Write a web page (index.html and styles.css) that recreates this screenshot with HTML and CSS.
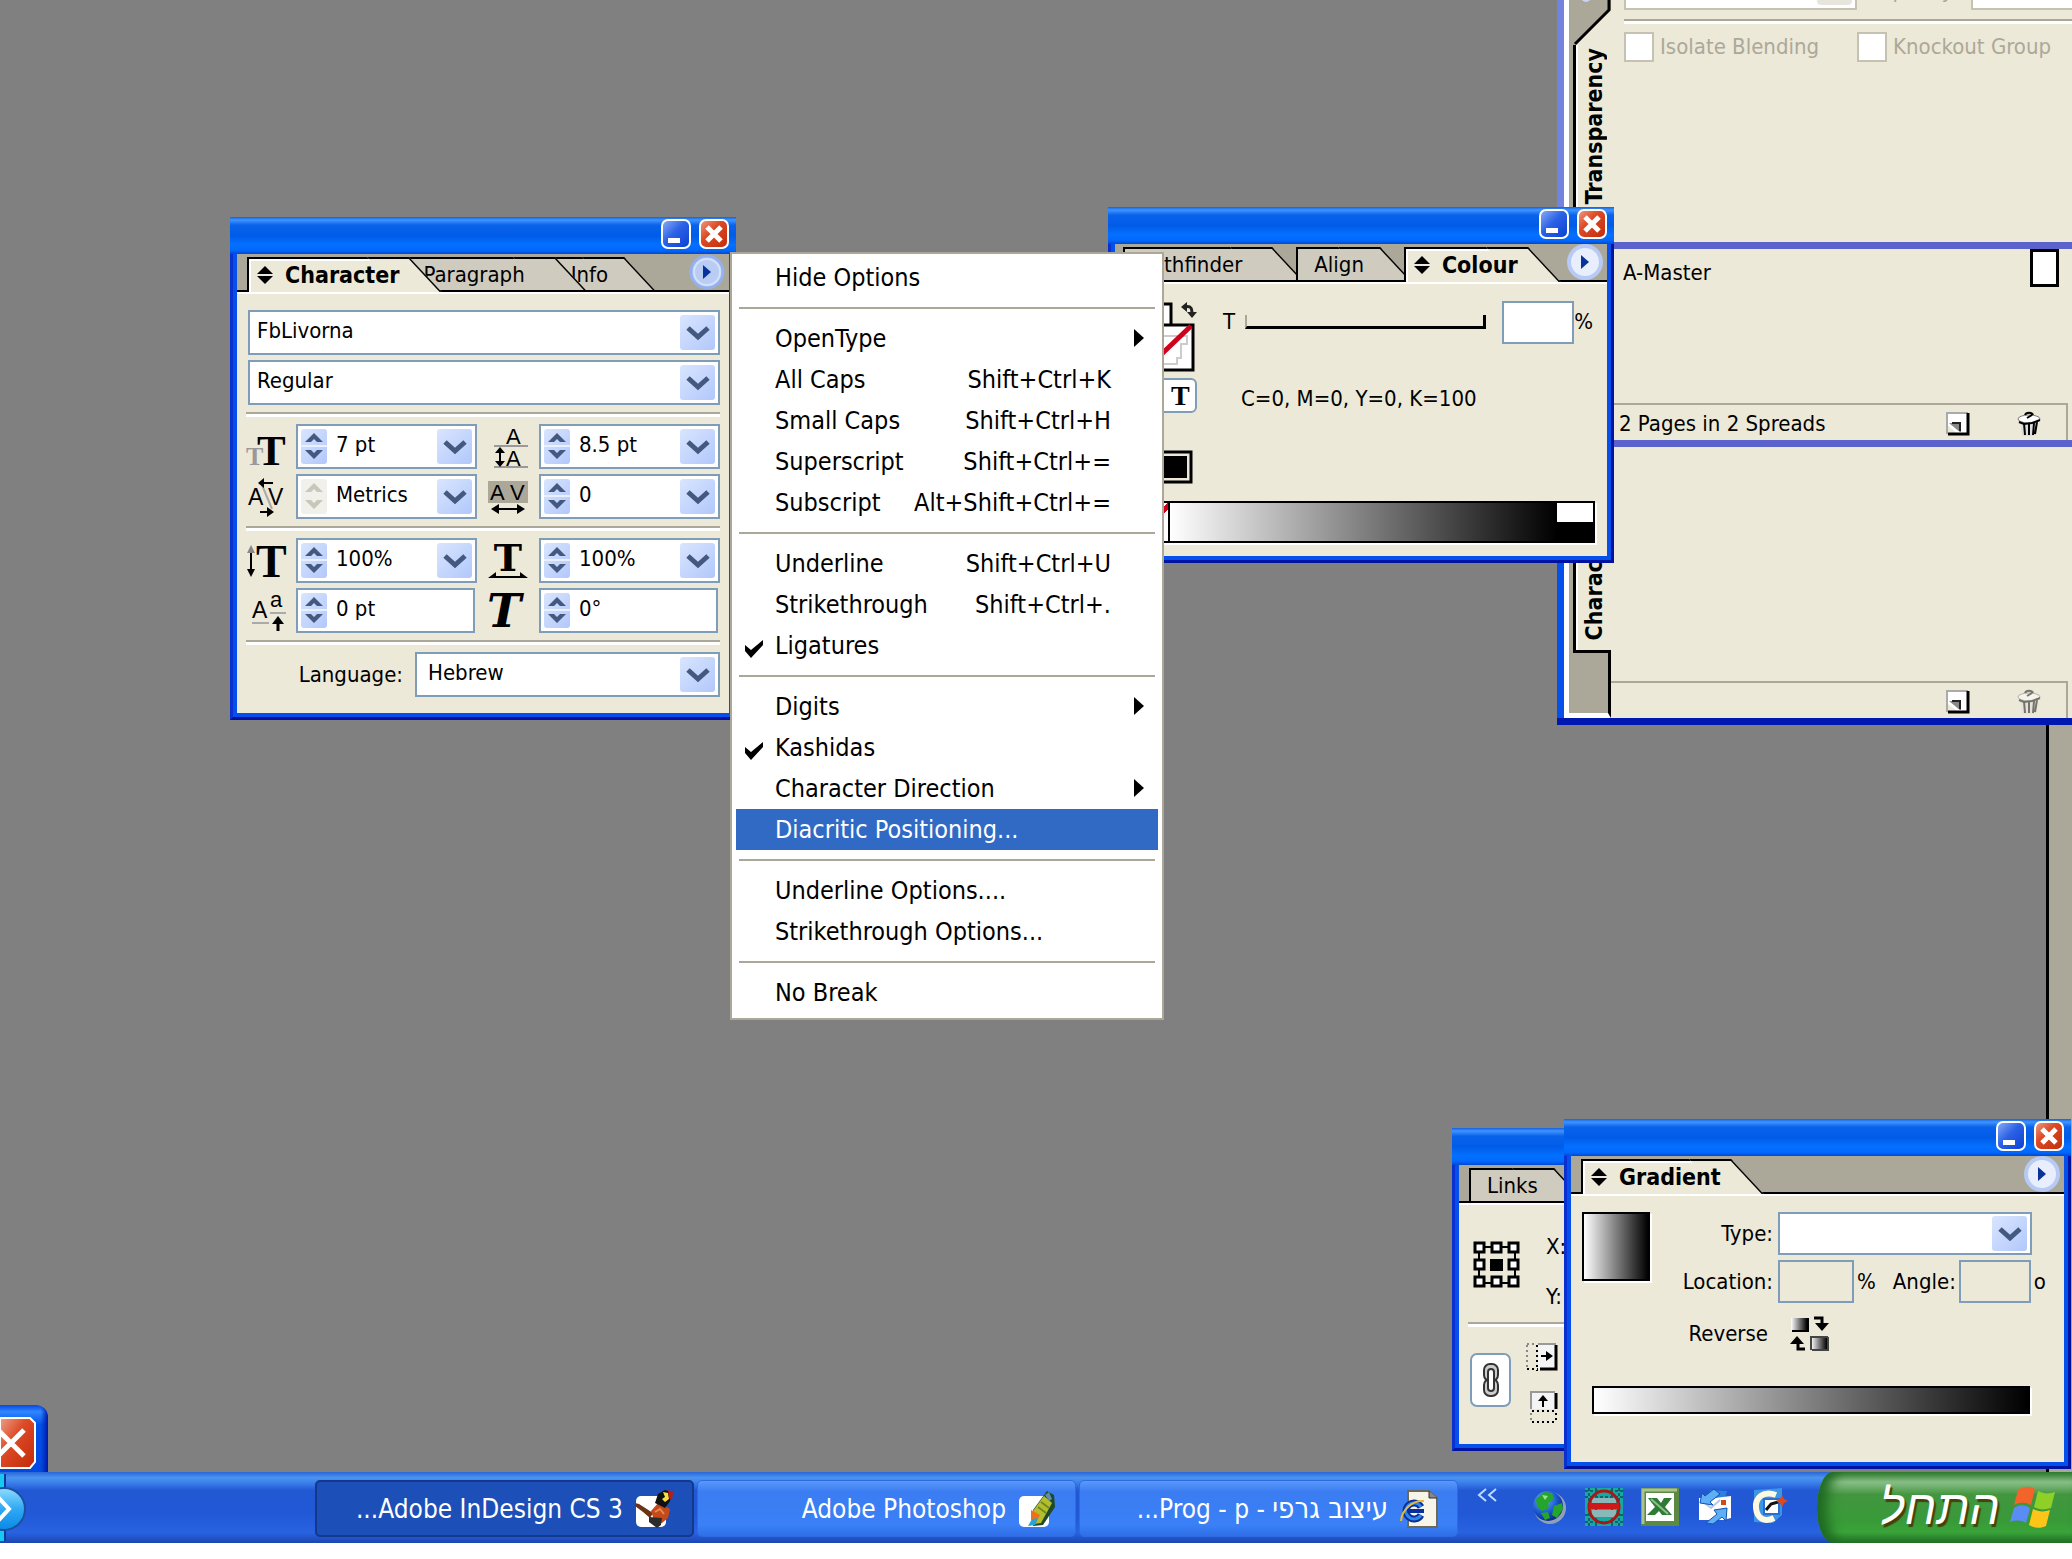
FILE: index.html
```html
<!DOCTYPE html>
<html lang="en">
<head>
  <meta charset="UTF-8">
  <title>Adobe InDesign CS 3</title>
  <link rel="stylesheet" href="styles.css">
</head>
<body>
  <!-- Shared icons -->
  <svg class="defs" width="0" height="0" aria-hidden="true">
    <defs>
      <linearGradient id="blueBtn" x1="0" y1="0" x2="1" y2="1">
        <stop offset="0" stop-color="#8fb0f8"/><stop offset=".45" stop-color="#2b62e6"/><stop offset="1" stop-color="#0a3fd0"/>
      </linearGradient>
      <linearGradient id="redBtn" x1="0" y1="0" x2="1" y2="1">
        <stop offset="0" stop-color="#eda08a"/><stop offset=".4" stop-color="#dd4a26"/><stop offset="1" stop-color="#c02a08"/>
      </linearGradient>
      <linearGradient id="drop" x1="0" y1="0" x2="1" y2="1">
        <stop offset="0" stop-color="#d9e5ff"/><stop offset="1" stop-color="#b2c8fb"/>
      </linearGradient>
      <linearGradient id="fade" x1="0" y1="0" x2="1" y2="0">
        <stop offset="0" stop-color="#fff"/><stop offset="1" stop-color="#000"/>
      </linearGradient>
      <radialGradient id="globe" cx=".35" cy=".3" r=".8">
        <stop offset="0" stop-color="#6db4ff"/><stop offset=".6" stop-color="#1550c8"/><stop offset="1" stop-color="#082068"/>
      </radialGradient>
      <linearGradient id="orb" x1="0" y1="0" x2="0" y2="1">
        <stop offset="0" stop-color="#8fdcff"/><stop offset=".5" stop-color="#2fa8f4"/><stop offset="1" stop-color="#0a8ae6"/>
      </linearGradient>
      <symbol id="i-min" viewBox="0 0 30 30">
        <rect x="1" y="1" width="28" height="28" rx="6" fill="url(#blueBtn)" stroke="#fff" stroke-width="2"/>
        <rect x="7" y="19" width="12" height="5" fill="#fff"/>
      </symbol>
      <symbol id="i-close" viewBox="0 0 30 30">
        <rect x="1" y="1" width="28" height="28" rx="6" fill="url(#redBtn)" stroke="#fff" stroke-width="2"/>
        <path d="M8 8l14 14M22 8L8 22" stroke="#fff" stroke-width="5"/>
      </symbol>
      <symbol id="i-fly" viewBox="0 0 36 36">
        <circle cx="18" cy="18" r="16" fill="#e8eefc" stroke="#b7caf5" stroke-width="4"/>
        <path d="M14 11v14l8-7z" fill="#0a3399"/>
      </symbol>
      <symbol id="i-fly-on" viewBox="0 0 36 36">
        <circle cx="18" cy="18" r="16" fill="#b9cdf4" stroke="#93b1ee" stroke-width="3"/>
        <circle cx="18" cy="18" r="13" fill="none" stroke="#d5e1fa" stroke-width="2"/>
        <path d="M14 11v14l8-7z" fill="#0a3399"/>
      </symbol>
      <symbol id="i-sort" viewBox="0 0 16 18">
        <path d="M0 8L8 0l8 8zM0 10h16l-8 8z" fill="#000"/>
      </symbol>
      <symbol id="i-drop" viewBox="0 0 35 35">
        <rect width="35" height="35" rx="3" fill="url(#drop)"/>
        <path d="M8 13l10 9 10-9" fill="none" stroke="#44597f" stroke-width="5"/>
      </symbol>
      <symbol id="i-spin" viewBox="0 0 26 35">
        <rect width="26" height="35" rx="3" fill="url(#drop)"/>
        <path d="M0 17h26" stroke="#e9f0ff" stroke-width="2"/>
        <path d="M4 13l9-9 9 9h-6l-3-3-3 3zM4 21l9 9 9-9h-6l-3 3-3-3z" fill="#44597f"/>
      </symbol>
      <symbol id="i-spin-off" viewBox="0 0 26 35">
        <rect width="26" height="35" rx="3" fill="#f1f0ea"/>
        <path d="M4 13l9-9 9 9h-6l-3-3-3 3zM4 21l9 9 9-9h-6l-3 3-3-3z" fill="#c9c7ba"/>
      </symbol>
      <symbol id="i-page" viewBox="0 0 24 24">
        <path d="M1 1h21v21H12L1 13z" fill="#fff"/>
        <path d="M1 22V1h21" fill="none" stroke="#aaa" stroke-width="2"/>
        <path d="M22 1v21H2" fill="none" stroke="#000" stroke-width="3"/>
        <path d="M3 11h12v10z" fill="#888"/><path d="M6 11h8v8" fill="none" stroke="#222" stroke-width="2"/>
      </symbol>
      <symbol id="i-trash" viewBox="0 0 26 26">
        <path d="M4 10l2 15h13l3-15z" fill="#ddd"/>
        <path d="M8 12l1 12M13 12v12M18 12l-1 12M21 11l-2 12" stroke="#000" stroke-width="2"/>
        <ellipse cx="13" cy="8" rx="11" ry="4" fill="#fff" stroke="#777" stroke-width="1"/>
        <path d="M9 4c1-3 7-3 8 0M11 7l5-3M3 11l5 2 8-1 8-3" fill="none" stroke="#000" stroke-width="2"/>
      </symbol>
    </defs>
  </svg>

  <main class="desktop">
    <div class="doc-edge"></div>

    <!-- Docked palettes -->
    <section class="dock" aria-label="Docked palettes">
      <div class="dock-strip">
        <svg class="strip-top" width="42" height="45" viewBox="0 0 42 45" aria-hidden="true">
          <path d="M42 10L6 45h36z" fill="#ece9d8"/>
          <path d="M40 0v10L6 44" fill="none" stroke="#000" stroke-width="3"/>
          <circle cx="17" cy="-3" r="5" fill="#c5d5f8"/>
        </svg>
        <div class="side-tab"><b>Transparency</b><b>Character</b></div>
        <div class="strip-end"></div>
      </div>
      <div class="dock-panels">
        <div class="panel transparency">
          <div class="cut-row">
            <span class="combo off"><i></i></span>
            <span class="cut-label">Opacity:</span>
            <span class="combo off"><i></i></span>
          </div>
          <hr class="rule">
          <div class="checks">
            <label><input type="checkbox" disabled>Isolate Blending</label>
            <label><input type="checkbox" disabled>Knockout Group</label>
          </div>
        </div>
        <div class="panel pages">
          <div class="master"><span>A-Master</span><i class="page-thumb"></i></div>
          <div class="status">
            <span>2 Pages in 2 Spreads</span>
            <button class="plain" aria-label="New page"><svg width="24" height="24"><use href="#i-page"/></svg></button>
            <button class="plain" aria-label="Delete page"><svg width="26" height="26"><use href="#i-trash"/></svg></button>
          </div>
        </div>
        <div class="panel styles">
          <div class="status">
            <span></span>
            <button class="plain" aria-label="New style"><svg width="24" height="24"><use href="#i-page"/></svg></button>
            <button class="plain dim" aria-label="Delete style"><svg width="26" height="26"><use href="#i-trash"/></svg></button>
          </div>
        </div>
      </div>
    </section>

    <!-- Character palette -->
    <section class="window character">
      <header class="titlebar">
        <button class="plain" aria-label="Minimize"><svg width="30" height="30"><use href="#i-min"/></svg></button>
        <button class="plain" aria-label="Close"><svg width="30" height="30"><use href="#i-close"/></svg></button>
      </header>
      <div class="tabs">
        <button class="tab active"><svg width="16" height="18"><use href="#i-sort"/></svg>Character</button>
        <button class="tab second wide">Paragraph</button>
        <button class="tab third">Info</button>
        <button class="plain flyout" aria-label="Palette menu"><svg width="36" height="36"><use href="#i-fly-on"/></svg></button>
      </div>
      <div class="palette">
        <div class="combo"><select aria-label="Font family"><option>FbLivorna</option></select><svg width="35" height="35"><use href="#i-drop"/></svg></div>
        <div class="combo"><select aria-label="Font style"><option>Regular</option></select><svg width="35" height="35"><use href="#i-drop"/></svg></div>
        <hr class="rule">
        <div class="fields">
          <svg class="icon" width="40" height="40" viewBox="0 0 40 40" aria-hidden="true">
            <text x="-2" y="38" class="glyph" font-size="26" fill="#999">T</text>
            <text x="9" y="38" class="glyph" font-size="43">T</text>
          </svg>
          <div class="combo"><svg width="26" height="35"><use href="#i-spin"/></svg><input type="text" value="7 pt" aria-label="Font size"><svg width="35" height="35"><use href="#i-drop"/></svg></div>
          <svg class="icon mid" width="40" height="42" viewBox="0 0 40 42" aria-hidden="true">
            <text x="18" y="18" class="sans" font-size="22">A</text>
            <text x="18" y="40" class="sans" font-size="22">A</text>
            <path d="M6 20h34M6 41h34" stroke="#999" stroke-width="2"/>
            <path d="M12 24v14" stroke="#000" stroke-width="2"/><path d="M7 27l5-6 5 6zM7 35l5 6 5-6z"/>
          </svg>
          <div class="combo"><svg width="26" height="35"><use href="#i-spin"/></svg><input type="text" value="8.5 pt" aria-label="Leading"><svg width="35" height="35"><use href="#i-drop"/></svg></div>

          <svg class="icon" width="40" height="40" viewBox="0 0 40 40" aria-hidden="true">
            <text x="0" y="28" class="sans" font-size="23">A</text>
            <text x="20" y="28" class="sans" font-size="23">V</text>
            <path d="M14 8l10 24" stroke="#aaa" stroke-width="2"/>
            <path d="M13 6h12M12 35h10" stroke="#000" stroke-width="2"/><path d="M16 1l-6 5 6 5zM19 30l7 5-7 5z"/>
          </svg>
          <div class="combo"><svg width="26" height="35"><use href="#i-spin-off"/></svg><input type="text" value="Metrics" aria-label="Kerning"><svg width="35" height="35"><use href="#i-drop"/></svg></div>
          <svg class="icon mid" width="40" height="36" viewBox="0 0 40 36" aria-hidden="true">
            <path d="M0 2h40v22H0z" fill="#aca899"/>
            <text x="2" y="21" class="sans" font-size="22">A</text>
            <text x="22" y="21" class="sans" font-size="22">V</text>
            <path d="M8 30h24" stroke="#000" stroke-width="2"/><path d="M11 25l-8 5 8 5zM29 25l8 5-8 5z"/>
          </svg>
          <div class="combo"><svg width="26" height="35"><use href="#i-spin"/></svg><input type="text" value="0" aria-label="Tracking"><svg width="35" height="35"><use href="#i-drop"/></svg></div>
        </div>
        <hr class="rule">
        <div class="fields">
          <svg class="icon" width="40" height="40" viewBox="0 0 40 40" aria-hidden="true">
            <text x="8" y="36" class="glyph" font-size="46">T</text>
            <path d="M3 8v24" stroke="#000" stroke-width="2"/><path d="M-1 12l4-8 4 8z" fill="#888"/><path d="M-1 28l4 8 4-8z"/>
          </svg>
          <div class="combo"><svg width="26" height="35"><use href="#i-spin"/></svg><input type="text" value="100%" aria-label="Vertical scale"><svg width="35" height="35"><use href="#i-drop"/></svg></div>
          <svg class="icon mid" width="40" height="36" viewBox="0 0 40 36" aria-hidden="true">
            <text x="20" y="28" class="glyph serif-wide" font-size="38" text-anchor="middle">T</text>
            <path d="M4 34h32" stroke="#000" stroke-width="2"/><path d="M0 35l8-6v6zM40 35l-8-6v6z"/>
          </svg>
          <div class="combo"><svg width="26" height="35"><use href="#i-spin"/></svg><input type="text" value="100%" aria-label="Horizontal scale"><svg width="35" height="35"><use href="#i-drop"/></svg></div>

          <svg class="icon" width="40" height="40" viewBox="0 0 40 40" aria-hidden="true">
            <text x="4" y="27" class="sans" font-size="23">A</text>
            <text x="22" y="16" class="sans" font-size="22">a</text>
            <path d="M4 32h17M22 22h16" stroke="#aaa" stroke-width="2"/>
            <path d="M30 30v10" stroke="#000" stroke-width="3"/><path d="M24 33l6-8 6 8z"/>
          </svg>
          <div class="combo short"><svg width="26" height="35"><use href="#i-spin"/></svg><input type="text" value="0 pt" aria-label="Baseline shift"></div>
          <svg class="icon mid" width="40" height="40" viewBox="0 0 40 40" aria-hidden="true">
            <text x="-1" y="36" class="glyph serif-wide" font-size="46" font-style="italic">T</text>
          </svg>
          <div class="combo short"><svg width="26" height="35"><use href="#i-spin"/></svg><input type="text" value="0°" aria-label="Skew"></div>
        </div>
        <hr class="rule">
        <div class="language">
          <label for="language">Language:</label>
          <div class="combo"><select id="language"><option>Hebrew</option></select><svg width="35" height="35"><use href="#i-drop"/></svg></div>
        </div>
      </div>
    </section>

    <!-- Colour palette -->
    <section class="window colour">
      <header class="titlebar">
        <button class="plain" aria-label="Minimize"><svg width="30" height="30"><use href="#i-min"/></svg></button>
        <button class="plain" aria-label="Close"><svg width="30" height="30"><use href="#i-close"/></svg></button>
      </header>
      <div class="tabs spaced">
        <button class="tab wide">Pathfinder</button>
        <button class="tab">Align</button>
        <button class="tab active"><svg width="16" height="18"><use href="#i-sort"/></svg>Colour</button>
        <button class="plain flyout" aria-label="Palette menu"><svg width="36" height="36"><use href="#i-fly"/></svg></button>
      </div>
      <div class="palette">
        <div class="colour-grid">
          <svg class="swatches" width="82" height="190" viewBox="0 0 82 190" aria-hidden="true">
            <rect x="14" y="4" width="42" height="42" fill="#fff" stroke="#000" stroke-width="3"/>
            <path d="M69 7c8-2 8 2 8 8" fill="none" stroke="#222" stroke-width="3"/><path d="M72 12h10l-5 6zM66 7l6-5v10z" fill="#222"/>
            <rect x="30" y="25" width="48" height="45" fill="#fff" stroke="#000" stroke-width="3"/>
            <path d="M48 36h24v8h-6v14h-4v6H46" fill="none" stroke="#ccc" stroke-width="2"/>
            <path d="M32 68l44-42" stroke="#d0021b" stroke-width="5"/>
            <rect x="44" y="79" width="37" height="33" rx="5" fill="#fff" stroke="#7f9db9" stroke-width="2"/>
            <text x="56" y="105" class="glyph" font-size="28">T</text>
            <rect x="34" y="152" width="42" height="30" fill="#ece9d8" stroke="#000" stroke-width="3"/>
            <path d="M38 156h34v22H38z"/>
          </svg>
          <div class="tint">
            <label for="tint">T</label>
            <input id="tint" class="track" type="range" disabled>
            <span class="percent"><input type="text" class="box" aria-label="Tint">%</span>
          </div>
          <p class="cmyk">C=0, M=0, Y=0, K=100</p>
        </div>
        <div class="ramp"><i class="none"></i><i class="fade"></i><i class="ends"></i></div>
      </div>
    </section>

    <!-- Links / Transform palette -->
    <section class="window links">
      <header class="titlebar"></header>
      <div class="tabs"><button class="tab">Links</button></div>
      <div class="palette">
        <div class="origin">
          <svg width="48" height="48" viewBox="0 0 48 48" aria-hidden="true">
            <path d="M6 6h36v36H6z" fill="none" stroke="#000" stroke-width="2"/>
            <g fill="#fff" stroke="#000" stroke-width="3">
              <rect x="2" y="2" width="9" height="9"/><rect x="19" y="2" width="9" height="9"/><rect x="36" y="2" width="9" height="9"/>
              <rect x="2" y="19" width="9" height="9"/><rect x="36" y="19" width="9" height="9"/>
              <rect x="2" y="36" width="9" height="9"/><rect x="19" y="36" width="9" height="9"/><rect x="36" y="36" width="9" height="9"/>
            </g>
            <path d="M17 18h13v12H17z"/>
          </svg>
          <div class="xy"><span>X:</span><span>Y:</span></div>
        </div>
        <hr class="rule">
        <div class="scale">
          <button class="chain" aria-label="Constrain proportions"><svg width="20" height="36" viewBox="0 0 20 36">
            <g fill="none" stroke="#333" stroke-width="2"><rect x="3" y="2" width="14" height="17" rx="6" fill="#ccc"/><rect x="3" y="17" width="14" height="17" rx="6" fill="#ccc"/><rect x="7" y="7" width="6" height="22" rx="3" fill="#fff"/></g></svg></button>
          <div class="scale-icons">
            <svg width="32" height="28" viewBox="0 0 32 28" aria-hidden="true">
              <path d="M12 1h18v25H12z" fill="#f4f4f4"/><path d="M12 1h18" stroke="#999" stroke-width="2"/>
              <path d="M30 2v24H14" fill="none" stroke="#000" stroke-width="3"/>
              <path d="M11 2v26M1 26h11" stroke="#000" stroke-width="2" stroke-dasharray="2 3"/><path d="M1 2v22M1 1h10" stroke="#888" stroke-width="2" stroke-dasharray="2 3"/>
              <path d="M15 13h7" stroke="#000" stroke-width="2"/><path d="M20 8l7 5-7 5z"/>
            </svg>
            <svg width="28" height="32" viewBox="0 0 28 32" aria-hidden="true">
              <path d="M1 1h25v17H1z" fill="#f4f4f4"/><path d="M1 18V1h24" fill="none" stroke="#999" stroke-width="2"/><path d="M26 2v16" stroke="#000" stroke-width="3"/>
              <path d="M2 20h25M2 31h25M26 22v9" stroke="#000" stroke-width="2" stroke-dasharray="2 3"/><path d="M1 22v8" stroke="#888" stroke-width="2" stroke-dasharray="2 3"/>
              <path d="M13 8v8" stroke="#000" stroke-width="2"/><path d="M8 10l5-6 5 6z"/>
            </svg>
          </div>
        </div>
      </div>
    </section>

    <!-- Gradient palette -->
    <section class="window gradient">
      <header class="titlebar">
        <button class="plain" aria-label="Minimize"><svg width="30" height="30"><use href="#i-min"/></svg></button>
        <button class="plain" aria-label="Close"><svg width="30" height="30"><use href="#i-close"/></svg></button>
      </header>
      <div class="tabs">
        <button class="tab active"><svg width="16" height="18"><use href="#i-sort"/></svg>Gradient</button>
        <button class="plain flyout" aria-label="Palette menu"><svg width="36" height="36"><use href="#i-fly"/></svg></button>
      </div>
      <div class="palette">
        <div class="gradient-grid">
          <div class="preview"></div>
          <div class="settings">
            <label for="gtype">Type:</label>
            <div class="combo"><select id="gtype"><option></option></select><svg width="35" height="35"><use href="#i-drop"/></svg></div>
            <label for="gloc">Location:</label>
            <div class="pair">
              <input id="gloc" class="box" type="text" disabled><span>%</span>
              <label for="gang">Angle:</label><input id="gang" class="box" type="text" disabled><span>o</span>
            </div>
            <span class="reverse">Reverse</span>
            <button class="plain swap" aria-label="Reverse gradient"><svg width="40" height="36" viewBox="0 0 40 36">
              <rect x="1" y="2" width="16" height="12" fill="url(#fade)"/><path d="M18 2v13H2" fill="none" stroke="#000" stroke-width="2"/>
              <rect x="21" y="21" width="16" height="12" fill="url(#fade)"/><path d="M38 21v13H22M21 34V21h17" fill="none" stroke="#444" stroke-width="2"/>
              <path d="M24 2h8v6M15 33H8v-6" fill="none" stroke="#000" stroke-width="3"/><path d="M25 7h14l-7 8zM0 28h14l-7-8z"/>
            </svg></button>
          </div>
        </div>
        <div class="gradient-bar"></div>
      </div>
    </section>

    <!-- Open palette menu -->
    <ul class="menu" role="menu">
      <li role="menuitem">Hide Options</li>
      <li class="sep" role="separator"></li>
      <li role="menuitem" class="sub">OpenType</li>
      <li role="menuitem">All Caps<kbd>Shift+Ctrl+K</kbd></li>
      <li role="menuitem">Small Caps<kbd>Shift+Ctrl+H</kbd></li>
      <li role="menuitem">Superscript<kbd>Shift+Ctrl+=</kbd></li>
      <li role="menuitem">Subscript<kbd>Alt+Shift+Ctrl+=</kbd></li>
      <li class="sep" role="separator"></li>
      <li role="menuitem">Underline<kbd>Shift+Ctrl+U</kbd></li>
      <li role="menuitem">Strikethrough<kbd>Shift+Ctrl+.</kbd></li>
      <li role="menuitem"><svg class="check" width="18" height="18" viewBox="0 0 18 18"><path d="M0 5l6 5L18 0v5L6 18 0 11z"/></svg>Ligatures</li>
      <li class="sep" role="separator"></li>
      <li role="menuitem" class="sub">Digits</li>
      <li role="menuitem"><svg class="check" width="18" height="18" viewBox="0 0 18 18"><path d="M0 5l6 5L18 0v5L6 18 0 11z"/></svg>Kashidas</li>
      <li role="menuitem" class="sub">Character Direction</li>
      <li role="menuitem" class="selected">Diacritic Positioning...</li>
      <li class="sep" role="separator"></li>
      <li role="menuitem">Underline Options....</li>
      <li role="menuitem">Strikethrough Options...</li>
      <li class="sep" role="separator"></li>
      <li role="menuitem">No Break</li>
    </ul>

    <!-- Corner of a window that hangs off the left edge -->
    <div class="corner">
      <button class="plain" aria-label="Close"><svg width="36" height="52" viewBox="0 0 36 52">
        <path d="M0 1h30l5 5v39l-5 6H0z" fill="url(#redBtn)" stroke="#fff" stroke-width="2"/>
        <path d="M-2 13l26 26M24 13L-2 39" stroke="#fff" stroke-width="5"/>
      </svg></button>
    </div>
  </main>

  <footer class="taskbar">
    <button class="plain orb" aria-label="Show hidden icons"><svg width="28" height="71" viewBox="0 0 28 71">
      <path d="M0 2h4v67H0z" fill="#18c8f0"/><path d="M5 2v67" stroke="#0b3a9a" stroke-width="2"/>
      <circle cx="4" cy="37" r="21" fill="url(#orb)" stroke="#1c4f9c" stroke-width="2"/>
      <path d="M-2 25l11 12-11 12" fill="none" stroke="#fff" stroke-width="4"/>
    </svg></button>
    <div class="tasks">
      <button class="task pressed"><span>...Adobe InDesign CS 3</span><svg width="38" height="38" viewBox="0 0 38 38">
        <rect x="1" y="6" width="30" height="31" rx="5" fill="#fff"/>
        <path d="M0 13l4 1 14 9-3 5-7-6-8-6z" fill="#6b3318"/>
        <path d="M16 21l8-9 11 7-2 9-6 5-8-3z" fill="#c44a1c"/><path d="M20 22l5-3 4 5" fill="none" stroke="#e98a4a" stroke-width="2"/>
        <path d="M14 27l13 1-1 7-4 3-8-6z" fill="#2b2b2b"/><path d="M20 13l3-9 7-4 6 2-1 9-5 7z" fill="#111"/><path d="M28 2l5 1 1 6-4 3-3-3 3-2z" fill="#f7e33a"/><path d="M33 0l5 2-1 8-3-2z" fill="#c01818"/>
      </svg></button>
      <button class="task"><span>Adobe Photoshop</span><svg width="38" height="38" viewBox="0 0 38 38">
        <rect x="1" y="6" width="30" height="31" rx="5" fill="#fff"/>
        <path d="M15 20L29 1l7 4 1 12-12 18-10 1z" fill="#1d4a2a"/>
        <path d="M15 21L26 6l8 7-11 20-7 1z" fill="#b5bd2c"/><path d="M20 17l8 6M23 12l8 6" stroke="#6c8a28" stroke-width="2"/>
        <path d="M13 20l9 5-4 8-5-3z" fill="#f07018"/><path d="M14 29l6-1-3 7-7 1z" fill="#28a4d8"/><path d="M27 5l4-3 3 7-3 2z" fill="#5f8fa8"/>
      </svg></button>
      <button class="task"><span>...Prog - p - <bdi lang="he">עיצוב גרפי</bdi></span><svg width="38" height="38" viewBox="0 0 38 38">
        <path d="M8 1h21l8 7v29H8z" fill="#f7f5ea" stroke="#6b6a58" stroke-width="2"/><path d="M29 1v7h8" fill="#888" stroke="#333"/>
        <path d="M21 17A8 8 0 1 0 21 25" fill="none" stroke="#0a2f9c" stroke-width="7"/><path d="M21 17A8 8 0 1 0 21 25" fill="none" stroke="#2c86ec" stroke-width="3"/>
        <path d="M7 21h17" stroke="#0a2f9c" stroke-width="4"/>
        <path d="M1 31C2 20 12 10 24 11" fill="none" stroke="#e6b93a" stroke-width="2"/>
      </svg></button>
    </div>
    <div class="quick">
      <svg class="more" width="20" height="14" viewBox="0 0 20 14" aria-hidden="true"><path d="M9 1L2 7l7 6M19 1l-7 6 7 6" fill="none" stroke="#b9dcff" stroke-width="2"/></svg>
      <button class="plain" aria-label="Internet"><svg width="38" height="38" viewBox="0 0 38 38"><circle cx="20" cy="20" r="16" fill="#8fa0b8"/><circle cx="18" cy="18" r="15" fill="url(#globe)"/><path d="M6 11l8-7 8 1 2 6-6 4 1 5-7 3-5-4zM24 18l8-3 1 6-6 9-5-3zM11 25l7-1 2 6-5 2z" fill="#25a52b"/><path d="M12 7l6 1-3 4z" fill="#9fe08a"/></svg></button>
      <button class="plain" aria-label="Dictionary"><svg width="38" height="38" viewBox="0 0 38 38"><path d="M0 0h38v38H0z" fill="#17a8a0"/><path d="M0 3h38M0 9h38M0 27h38M0 34h38M4 0v38M11 0v38M27 0v38M34 0v38" stroke="#0c6470" stroke-width="2" stroke-dasharray="3 2"/><path d="M7 10h24v7H7zM7 22h24v7H7z" fill="#8ab8b8"/><ellipse cx="19" cy="19" rx="15" ry="16" fill="none" stroke="#a81818" stroke-width="3"/><path d="M4 15h30v6H4z" fill="#d01818"/></svg></button>
      <button class="plain" aria-label="Excel"><svg width="38" height="38" viewBox="0 0 38 38"><path d="M0 0h38v38H0z" fill="#5c8a42"/><path d="M2 36V2h34" fill="none" stroke="#a9c48e" stroke-width="3"/><path d="M5 5h28v28H5z" fill="#fff"/><path d="M7 10h9l4 5 3-5h8l-7 9 7 8H21l-3-4-4 4H6l8-8z" fill="#2f7a35"/><path d="M10 11l17 15" stroke="#8cc08a" stroke-width="2"/></svg></button>
      <button class="plain" aria-label="Mail"><svg width="38" height="38" viewBox="0 0 38 38"><path d="M14 2l17 1-3 10-16 2z" fill="#2d7fe0"/><path d="M3 10h16l16-2v22l-8 2H3z" fill="#fff"/><path d="M5 12l10 8 9-8" fill="none" stroke="#b8c8e0" stroke-width="2"/><path d="M4 15l2-10 3 3 9-7 6 5-10 8 3 3z" fill="#5db0f5" stroke="#1551b0"/><path d="M31 20l-1 13-4-4-9 7-7-1 11-9-3-4z" fill="#5db0f5" stroke="#1551b0"/><rect x="25" y="12" width="5" height="5" fill="#d04a20"/></svg></button>
      <button class="plain" aria-label="Outlook"><svg width="38" height="38" viewBox="0 0 38 38"><path d="M3 2l28-2v27l-9 8-19-1z" fill="#3c96e8"/><path d="M25 7C12 2 4 10 5 20s8 15 18 10" fill="none" stroke="#fff8e0" stroke-width="6"/><path d="M13 11h15v15H13z" fill="#fff" stroke="#2a6fd0" stroke-width="2"/><path d="M15 22l5-6 7-2" fill="none" stroke="#111" stroke-width="3"/><path d="M31 7l2 4 4 2-4 2-2 4-2-4-4-2 4-2z" fill="#e04818"/></svg></button>
    </div>
    <button class="start"><span lang="he">התחל</span><svg width="46" height="44" viewBox="0 0 46 44">
      <path d="M8 4c6-4 12-4 17-1l-4 16c-6-3-11-3-17 0z" fill="#f2642a"/><path d="M28 5c6 3 11 3 17 1l-4 16c-6 2-12 2-17-1z" fill="#8fd028"/>
      <path d="M4 22c6-4 11-3 16 0l-4 15c-5-3-10-3-16-1z" fill="#5a8cf5"/><path d="M23 23c6 3 11 3 17 1l-4 16c-6 3-12 2-17-1z" fill="#fcc518"/>
    </svg></button>
  </footer>
</body>
</html>
```

FILE: styles.css
```css
* {
  box-sizing: border-box;
}

body {
  margin: 0;
  min-height: 100vh;
  display: flex;
  flex-direction: column;
  padding-bottom: 16px;
  background: #fff;
  color: #000;
  font-family: "DejaVu Sans Condensed", "DejaVu Sans", Tahoma, sans-serif;
  font-size: 22px;
  line-height: 26px;
}

button, input, select {
  font: inherit;
  color: inherit;
}

svg {
  display: block;
  flex: none;
}

.defs {
  position: absolute;
}

.plain {
  border: 0;
  padding: 0;
  background: none;
}

.desktop {
  flex: 1;
  position: relative;
  overflow: hidden;
  background: #808080;
}

.doc-edge {
  position: absolute;
  top: 0;
  bottom: 0;
  right: 0;
  width: 26px;
  background: #aca899;
  border-left: 3px solid #000;
}

/* Windows */
.window {
  position: absolute;
  padding: 0 4px 4px;
  border: solid;
  border-width: 0 3px 3px;
  border-color: #0012a0 #0012a0 #0012a0 #0a30d0;
  background: #0550ea;
}

.character { left: 230px; top: 217px; width: 506px; }
.colour { left: 1108px; top: 207px; width: 506px; }
.links { left: 1452px; top: 1128px; width: 300px; }
.gradient { left: 1564px; top: 1119px; width: 507px; }

.titlebar {
  display: flex;
  justify-content: flex-end;
  align-items: flex-start;
  gap: 8px;
  height: 37px;
  margin: 0 -7px;
  padding: 2px 7px 0;
  background: linear-gradient(#1360e0, #3f95ff 8%, #0a62ea 22%, #005ce8 50%, #0470ff 75%, #0068ff 90%, #0048d0);
}

.tabs {
  display: flex;
  height: 38px;
  padding: 3px 4px 0 10px;
  background: #aca899;
  border-bottom: 2px solid #000;
  isolation: isolate;
}

.tab {
  position: relative;
  isolation: isolate;
  display: flex;
  align-items: center;
  gap: 12px;
  padding: 0 16px;
  border: solid #000;
  border-width: 2px 0 0 2px;
  background: #cfccbf;
  white-space: nowrap;
}

.tab::after {
  content: "";
  position: absolute;
  z-index: -1;
  top: -2px;
  bottom: 0;
  right: 0;
  width: 40px;
  border: solid #000;
  border-width: 2px 2px 0 0;
  background: inherit;
  transform: skewX(43deg);
  transform-origin: top right;
}

.tab.wide {
  padding-right: 30px;
}

.tab.active {
  z-index: 3;
  margin-bottom: -2px;
  padding: 0 10px 2px 8px;
  background: #ece9d8;
  font-size: 23px;
  font-weight: bold;
  box-shadow: inset 2px 2px #fff;
}

.tab.second {
  z-index: 2;
  padding-left: 14px;
  border-left: 0;
}

.tab.third {
  z-index: 1;
  border-left: 0;
}

.spaced {
  padding-left: 8px;
}

.spaced .tab {
  margin-right: 24px;
}

.spaced .tab:nth-child(2) { z-index: 2; }

.spaced .tab:nth-child(3) { margin-right: 0; }

.tabs .flyout {
  margin: -3px 0 0 auto;
}

.spaced .flyout,
.gradient .flyout {
  z-index: 4;
}

.palette {
  padding: 16px 9px 16px 11px;
  background: #ece9d8;
  border-top: 2px solid #fff;
}

.rule {
  height: 5px;
  margin: 7px 0 7px -2px;
  border: 0;
  border-top: 2px solid #aca899;
  background: #fff;
}

/* Form fields */
.combo {
  display: flex;
  align-items: center;
  height: 45px;
  padding: 3px;
  border: 2px solid #7f9db9;
  background: #fff;
}

.combo + .combo {
  margin-top: 5px;
}

.combo select,
.combo input {
  flex: 1;
  min-width: 0;
  height: 35px;
  padding: 0 4px 4px;
  border: 0;
  background: none;
  appearance: none;
}

.combo input {
  padding-left: 9px;
}

.combo.off {
  border-color: #c5c2b4;
}

.box {
  width: 72px;
  height: 43px;
  border: 2px solid #7f9db9;
  background: #fff;
}

.box:disabled {
  background: #ece9d8;
}

.fields {
  display: grid;
  grid-template-columns: 48px minmax(0, 1fr) 62px minmax(0, 1fr);
  gap: 5px 0;
  align-items: center;
}

.fields .combo {
  margin: 0;
}

.fields .short {
  margin-right: 2px;
}

.icon {
  overflow: visible;
}

.icon.mid {
  justify-self: center;
}

.glyph {
  font-family: "Liberation Serif", serif;
  font-weight: bold;
}

.serif-wide {
  font-family: "DejaVu Serif", serif;
}

.sans {
  font-family: "Liberation Sans", sans-serif;
}

.language {
  display: flex;
  align-items: center;
  justify-content: flex-end;
  gap: 12px;
}

.language .combo {
  width: 305px;
}

.language select {
  padding-left: 8px;
}

/* Colour palette */
.colour .palette {
  padding: 16px 9px 13px 0;
}

.colour-grid {
  display: grid;
  grid-template-columns: 82px 1fr;
  grid-template-rows: 44px 1fr;
}

.swatches {
  grid-row: 1 / 3;
}

.tint {
  display: flex;
  align-items: center;
  padding: 0 5px 0 26px;
}

.track {
  flex: 1;
  min-width: 0;
  height: 14px;
  margin: 0 16px 0 10px;
  appearance: none;
  background: none;
  border: solid #000;
  border-width: 0 3px 3px 0;
  border-left: 2px solid #aca899;
}

.track::-webkit-slider-thumb {
  appearance: none;
  width: 0;
}

.percent {
  display: flex;
  align-items: center;
}

.cmyk {
  margin: 42px 0 0 44px;
}

.ramp {
  display: flex;
  height: 42px;
  margin: 11px 3px 0 19px;
  border: 2px solid #000;
  box-shadow: 2px 2px #fff;
}

.ramp .none {
  width: 34px;
  background: linear-gradient(135deg, #fff 45%, #d0021b 45% 55%, #fff 55%);
  border-right: 2px solid #000;
}

.ramp .fade {
  flex: 1;
  background: linear-gradient(90deg, #fff, #000);
}

.ramp .ends {
  width: 36px;
  background: linear-gradient(#fff 50%, #000 50%);
}

/* Links palette */
.links .palette {
  height: 241px;
}

.origin {
  display: flex;
  gap: 25px;
  height: 94px;
}

.origin svg {
  margin: 20px 0 0 3px;
}

.xy {
  display: flex;
  flex-direction: column;
  gap: 24px;
  padding-top: 13px;
}

.scale {
  display: flex;
  gap: 15px;
  padding-top: 9px;
}

.chain {
  width: 41px;
  height: 54px;
  margin-top: 10px;
  padding: 0 9px;
  border: 2px solid #7f9db9;
  border-radius: 7px;
  background: #fff;
}

.scale-icons {
  display: flex;
  flex-direction: column;
  align-items: flex-end;
  gap: 20px;
}

/* Gradient palette */
.gradient .palette {
  padding: 16px 32px 48px 11px;
}

.gradient-grid {
  display: flex;
  justify-content: space-between;
}

.preview {
  width: 68px;
  height: 69px;
  border: 2px solid #000;
  background: linear-gradient(90deg, #fff, #000);
  box-shadow: 2px 2px #fff;
}

.settings {
  display: grid;
  grid-template-columns: auto 254px;
  gap: 5px 5px;
  align-items: center;
  justify-items: end;
}

.settings .combo {
  width: 254px;
  height: 43px;
}

.pair {
  display: flex;
  align-items: center;
  justify-self: start;
  gap: 3px;
  white-space: nowrap;
}

.pair .box:first-child {
  width: 76px;
}

.pair label {
  margin-left: 14px;
}

.settings .reverse {
  padding-right: 5px;
}

.settings .swap {
  justify-self: start;
  margin: 8px 12px;
}

.gradient-bar {
  height: 28px;
  margin: 26px 2px 0 10px;
  border: 2px solid #000;
  background: linear-gradient(90deg, #fff, #000);
  box-shadow: 2px 2px #fff;
}

/* Dock */
.dock {
  position: absolute;
  top: 0;
  right: 0;
  width: 515px;
  display: flex;
  border-left: 7px solid #7484de;
  border-bottom: 7px solid #0018b0;
  border-image: linear-gradient(#7484de 50%, #0550ea 50%, #0550ea 99%, #0018b0 99%) 7;
  border-image-width: 0 0 7px 7px;
  background: #ece9d8;
}

.dock-strip {
  display: flex;
  flex-direction: column;
  width: 47px;
  border-left: 5px solid #fff;
  background: #aca899;
}

.side-tab {
  flex: 1;
  display: flex;
  flex-direction: column;
  justify-content: space-between;
  align-items: center;
  margin-left: 4px;
  padding: 3px 0 10px;
  border: solid #000;
  border-width: 0 0 3px 3px;
  background: #ece9d8;
  box-shadow: inset 2px 0 #fff;
  font-size: 23px;
}

.side-tab b {
  writing-mode: vertical-rl;
  transform: rotate(180deg);
}

.strip-end {
  height: 65px;
  border-right: 3px solid #000;
  border-bottom: 5px solid #fff;
}

.dock-panels {
  flex: 1;
  min-width: 0;
}

.panel {
  display: flex;
  flex-direction: column;
}

.transparency {
  height: 249px;
  padding-left: 13px;
  border-bottom: 7px solid #5b62cc;
  color: #aca899;
}

.transparency .rule {
  margin: 9px 0 8px;
}

.cut-row {
  display: flex;
  align-items: flex-end;
  height: 10px;
  overflow: hidden;
}

.cut-row .combo {
  flex: none;
  justify-content: flex-end;
  width: 233px;
  margin: 0;
}

.cut-row i {
  width: 35px;
  height: 35px;
  border-radius: 4px;
  background: #e8e6dc;
}

.cut-label {
  flex: none;
  width: 114px;
  padding: 0 0 6px 20px;
}

.checks {
  display: flex;
}

.checks label {
  flex: none;
  display: flex;
  align-items: center;
  gap: 6px;
  width: 233px;
}

.checks input {
  appearance: none;
  width: 30px;
  height: 30px;
  margin: 0;
  border: 2px solid #c5c2b4;
  background: #fff;
}

.pages {
  height: 198px;
  border-bottom: 7px solid #5b62cc;
}

.master {
  flex: 1;
  display: flex;
  justify-content: space-between;
  padding: 0 13px 0 12px;
  line-height: 47px;
}

.page-thumb {
  width: 29px;
  height: 38px;
  border: 3px solid #000;
  background: #fff;
}

.status {
  display: flex;
  align-items: center;
  gap: 46px;
  height: 37px;
  margin-right: 4px;
  padding: 3px 24px 0 8px;
  border: solid #aca899;
  border-width: 2px 2px 0 0;
}

.status span {
  flex: 1;
}

.styles {
  height: 271px;
  justify-content: flex-end;
}

.dim {
  opacity: .5;
}

/* Popup menu */
.menu {
  position: absolute;
  left: 730px;
  top: 252px;
  width: 434px;
  margin: 0;
  padding: 3px 4px 5px;
  border: 2px solid #aca899;
  background: #fff;
  list-style: none;
  font-size: 25px;
  line-height: 41px;
}

.menu li {
  position: relative;
  display: flex;
  justify-content: space-between;
  height: 41px;
  padding: 0 47px 0 39px;
}

.menu .sep {
  height: 2px;
  margin: 9px 3px;
  background: #aca899;
}

.menu .selected {
  background: #316ac5;
  color: #fff;
}

.menu kbd {
  font: inherit;
}

.menu .sub::after {
  content: "";
  position: absolute;
  right: 14px;
  top: 11px;
  border: 9px solid transparent;
  border-left: 10px solid #000;
  border-right: 0;
}

.check {
  position: absolute;
  left: 9px;
  top: 15px;
}

/* Window corner at the left edge */
.corner {
  position: absolute;
  left: 0;
  bottom: 0;
  width: 48px;
  height: 67px;
  padding-top: 12px;
  border-radius: 0 12px 0 0;
  background: linear-gradient(90deg, transparent 85%, #0018a8), linear-gradient(#0a48e0, #2e86ff 10%, #0050e8 30%, #0048e0);
}

/* Taskbar */
.taskbar {
  display: flex;
  height: 71px;
  background: linear-gradient(#2a66d8, #4a94f0 8%, #3d84ec 14%, #2258d4 26%, #2258d6 60%, #2863e2 85%, #1c46b0);
  color: #fff;
  font-size: 26px;
}

.tasks {
  display: flex;
  gap: 3px;
  margin-left: auto;
  padding: 8px 0 6px;
}

.task {
  display: flex;
  align-items: center;
  justify-content: flex-end;
  gap: 12px;
  width: 379px;
  padding: 0 19px 0 0;
  border: 1px solid #2f6ae0;
  border-radius: 5px;
  background: linear-gradient(#5a98fa, #3b7cf2 20%, #3a80f6 80%, #2f6ee6);
  white-space: nowrap;
}

.task bdi {
  font-size: 29px;
}

.task.pressed {
  border: 2px solid #14398c;
  background: #1c4fb8;
}

.quick {
  display: flex;
  align-items: flex-start;
  width: 359px;
  padding: 16px 28px 0 19px;
  justify-content: space-between;
}

.quick .more {
  margin: 0 16px 0 0;
}

.start {
  display: flex;
  align-items: center;
  justify-content: flex-end;
  gap: 10px;
  width: 255px;
  padding: 0 16px 0 0;
  border: 0;
  border-radius: 16px 0 0 16px / 36px 0 0 36px;
  background: linear-gradient(#3c8a3c, #8cc08a 14%, #42963f 32%, #389a38 70%, #3ba53a 85%, #26752a);
  box-shadow: inset 10px 0 12px #1f6a22;
  color: #fff;
  font-family: "Liberation Sans", sans-serif;
  font-size: 48px;
  font-style: italic;
  text-shadow: 2px 3px 1px #45400c;
}
```
